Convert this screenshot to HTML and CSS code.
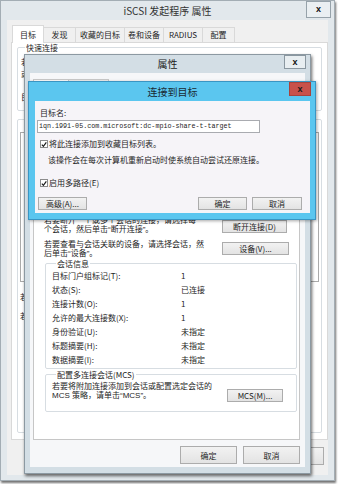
FILE: index.html
```html
<!DOCTYPE html>
<html lang="zh-CN">

<head>
   <meta charset="UTF-8">
   <meta name="viewport" content="width=device-width, initial-scale=1.0">
   <title>iSCSI 发起程序 属性</title>
   <link rel="stylesheet" href="styles.css">
</head>

<body>
   <!-- back window (mostly covered) -->
   <div class="win win-main">
      <div class="main-title">iSCSI 发起程序 属性<span class="xbtn main-x">x</span></div>
      <div class="main-body">
         <div class="tabs">
            <span class="tab on w32">目标</span>
            <span class="tab w32">发现</span>
            <span class="tab w49">收藏的目标</span>
            <span class="tab w39">卷和设备</span>
            <span class="tab w39">RADIUS</span>
            <span class="tab w32">配置</span>
         </div>
         <div class="tabpage">
            <fieldset class="grp quick">
               <legend>快速连接</legend>
               <p class="para">若</p>
               <p class="para">或</p>
               <p class="q-lbl">目</p>
            </fieldset>
            <fieldset class="grp found">
               <legend>已</legend>
               <div class="listbox"></div>
               <p class="para">若</p>
               <p class="para">若</p>
            </fieldset>
         </div>
         <div class="main-btns">
            <button class="btn">应用(A)</button>
         </div>
      </div>
   </div>

   <!-- properties window -->
   <div class="win win-prop">
      <div class="prop-title">属性<span class="xbtn prop-x">x</span></div>
      <div class="prop-body">
         <div class="ptabs">
            <span class="ptab on"></span>
            <span class="ptab"></span>
         </div>
         <div class="prop-page">
            <div class="sess"></div>
            <div class="act-row disc">
               <p class="act-text">若要断开一个或多个会话的连接，请选择每<br>个会话，然后单击“断开连接”。</p>
               <button class="btn b-disc">断开连接(D)</button>
            </div>
            <div class="act-row dev">
               <p class="act-text">若要查看与会话关联的设备，请选择会话，然<br>后单击“设备”。</p>
               <button class="btn b-dev">设备(V)...</button>
            </div>
            <fieldset class="grp info">
               <legend>会话信息</legend>
               <div class="kv"><span class="k">目标门户组标记(T):</span><span>1</span></div>
               <div class="kv"><span class="k">状态(S):</span><span>已连接</span></div>
               <div class="kv"><span class="k">连接计数(O):</span><span>1</span></div>
               <div class="kv"><span class="k">允许的最大连接数(X):</span><span>1</span></div>
               <div class="kv"><span class="k">身份验证(U):</span><span>未指定</span></div>
               <div class="kv"><span class="k">标题摘要(H):</span><span>未指定</span></div>
               <div class="kv"><span class="k">数据摘要(I):</span><span>未指定</span></div>
            </fieldset>
            <fieldset class="grp mcs">
               <legend>配置多连接会话(MCS)</legend>
               <div class="mcs-row">
                  <p class="act-text">若要将附加连接添加到会话或配置选定会话的<br>MCS 策略，请单击“MCS”。</p>
                  <button class="btn b-mcs">MCS(M)...</button>
               </div>
            </fieldset>
         </div>
         <div class="prop-btns">
            <button class="btn">确定</button>
            <button class="btn">取消</button>
         </div>
      </div>
   </div>

   <!-- connect window -->
   <div class="win win-conn">
      <div class="conn-title">连接到目标<span class="xbtn conn-x">x</span></div>
      <div class="conn-body">
         <p class="lbl">目标名:</p>
         <div class="input">iqn.1991-05.com.microsoft:dc-mpio-share-t-target</div>
         <div class="chk">
            <span class="box"><svg width="7" height="7" viewBox="0 0 7 7"><path d="M1 3.6 L2.8 5.6 L6.2 1" fill="none" stroke="#1a1a1a" stroke-width="1.4"/></svg></span>
            将此连接添加到收藏目标列表。
         </div>
         <p class="note">该操作会在每次计算机重新启动时使系统自动尝试还原连接。</p>
         <div class="chk multi">
            <span class="box"><svg width="7" height="7" viewBox="0 0 7 7"><path d="M1 3.6 L2.8 5.6 L6.2 1" fill="none" stroke="#1a1a1a" stroke-width="1.4"/></svg></span>
            启用多路径(E)
         </div>
         <div class="conn-btns">
            <button class="btn b-adv">高级(A)...</button>
            <button class="btn b-ok">确定</button>
            <button class="btn b-cancel">取消</button>
         </div>
      </div>
   </div>
</body>

</html>
```

FILE: styles.css
```css
* {
   padding: 0;
   margin: 0;
   box-sizing: border-box;
}

body {
   width: 338px;
   height: 484px;
   position: relative;
   overflow: hidden;
   background: #ffffff;
   font-family: "Noto Sans CJK SC", "Noto Sans", sans-serif;
   font-size: 8px;
   line-height: 9px;
   color: #1e1e1e;
}

.win {
   position: absolute;
}

.xbtn {
   position: absolute;
   top: 0;
   display: flex;
   justify-content: center;
   align-items: center;
   font-family: "Liberation Sans", sans-serif;
   font-weight: 700;
   font-size: 9px;
   color: #111;
}

.btn {
   font-family: inherit;
   font-size: 8px;
   line-height: 11px;
   color: #1e1e1e;
   border: 1px solid #acacac;
   background: linear-gradient(#f2f2f2, #e3e3e3);
   text-align: center;
}

.grp {
   border: 1px solid #d7dde2;
   border-radius: 2px;
   min-width: 0;
}

.grp legend {
   padding: 0 1px;
   margin-left: 4px;
   line-height: 9px;
}

/* back window */
.win-main {
   left: 0;
   top: 0;
   width: 335px;
   height: 481px;
   background: #e2e8ec;
   border: 1px solid #a3adb4;
   box-shadow: 1px 2px 2px rgba(0, 0, 0, 0.55);
   padding: 0 6px 6px;
}

.main-title {
   height: 19px;
   line-height: 19px;
   text-align: center;
   font-size: 10px;
   color: #333;
}

.main-x {
   right: 3px;
   width: 25px;
   height: 17px;
   border: 1px solid #96a2aa;
   background: #eaeff2;
}

.main-body {
   height: 455px;
   background: #f0f0f0;
   padding: 5px 0 0 4px;
}

.tabs {
   display: flex;
   align-items: flex-end;
   height: 17px;
   margin-left: 1px;
   position: relative;
   z-index: 1;
}

.tab {
   height: 15px;
   line-height: 14px;
   text-align: center;
   border: 1px solid #d9d9d9;
   border-left: none;
   border-bottom: none;
   background: #f0f0f0;
}

.tab.on {
   height: 18px;
   margin-bottom: -1px;
   background: #fff;
   border-left: 1px solid #d9d9d9;
   line-height: 17px;
}

.w32 { width: 32px; }
.w39 { width: 39px; }
.w49 { width: 49px; }

.tabpage {
   width: 317px;
   height: 398px;
   background: #fff;
   border: 1px solid #d9d9d9;
   padding: 0 5px;
}

.quick {
   height: 68px;
   padding: 3px 3px 0;
}

.para {
   margin-top: 2px;
   line-height: 10px;
}

.q-lbl {
   margin-top: 13px;
}

.found {
   margin-top: 4px;
   height: 318px;
   padding: 8px 2px 0;
}

.listbox {
   height: 150px;
   border: 1px solid #aaa;
   margin-bottom: 10px;
}

.found .para {
   margin-top: 9px;
}

.main-btns {
   display: flex;
   justify-content: flex-end;
   margin: 7px 4px 0 0;
}

.main-btns .btn {
   width: 58px;
   height: 18px;
   color: #8a8a8a;
}

/* properties window */
.win-prop {
   left: 24px;
   top: 54px;
   width: 287px;
   height: 420px;
   background: #d3dee5;
   border: 1px solid #8c99a2;
   box-shadow: 1px 2px 3px rgba(0, 0, 0, 0.6);
   padding: 0 5px 6px;
}

.prop-title {
   height: 18px;
   line-height: 18px;
   text-align: center;
   font-size: 10px;
   color: #222;
}

.prop-x {
   right: 4px;
   width: 22px;
   height: 14px;
   border: 1px solid #8a97a0;
   background: #e8eef1;
}

.prop-body {
   height: 394px;
   background: #f6f7f9;
   padding: 6px 0 0 3px;
}

.ptabs {
   display: flex;
   height: 16px;
}

.ptab {
   width: 36px;
   border: 1px solid #c9c9c9;
   border-bottom: none;
   background: #fff;
}

.ptab + .ptab {
   width: 40px;
   background: #f0f0f0;
   border-left: none;
}

.prop-page {
   width: 267px;
   height: 345px;
   background: #fff;
   border: 1px solid #c6c6c6;
   padding: 0 0 0 10px;
}

.sess {
   height: 120px;
}

.act-row {
   display: flex;
   align-items: flex-start;
}

/* tight two-line notes: latin metrics keep the line boxes within 9px */
.act-text {
   width: 178px;
   white-space: nowrap;
   line-height: 9px;
   font-family: "Liberation Sans", "Noto Sans CJK SC", sans-serif;
}

.disc .btn {
   margin-top: 4px;
}

.dev {
   margin-top: 6px;
}

.dev .btn {
   margin-top: 2px;
}

.b-disc {
   width: 65px;
   height: 13px;
}

.b-dev {
   width: 67px;
   height: 13px;
}

.info {
   margin: 1px 0 0 1px;
   width: 252px;
   padding: 1px 0 1px 6px;
}

.kv {
   display: flex;
   line-height: 14px;
}

.k {
   width: 129px;
}

.mcs {
   margin: 1px 0 0 1px;
   width: 252px;
   padding: 3px 0 9px 6px;
}

.mcs-row {
   display: flex;
   align-items: flex-start;
}

.mcs-row .act-text {
   width: 175px;
}

.b-mcs {
   width: 56px;
   height: 13px;
   margin-top: 7px;
}

.prop-btns {
   display: flex;
   justify-content: flex-end;
   gap: 6px;
   margin: 6px 5px 0 0;
}

.prop-btns .btn {
   width: 57px;
   height: 18px;
}

/* connect window */
.win-conn {
   left: 28px;
   top: 81px;
   width: 288px;
   height: 139px;
   background: #5bc6ef;
   border: 1px solid #3a95c3;
   box-shadow: 1px 1px 3px rgba(0, 0, 0, 0.35);
   padding: 0 5px 6px 6px;
}

.conn-title {
   height: 19px;
   line-height: 19px;
   text-align: center;
   font-size: 10px;
   color: #1a2a33;
}

.conn-x {
   right: 4px;
   width: 22px;
   height: 14px;
   background: #c8514a;
   border: 1px solid #a8433d;
   color: #1a1a1a;
}

.conn-body {
   height: 112px;
   background: #f6f4f8;
   padding: 7px 0 0 5px;
}

.input {
   margin: 3px 0 0 -3px;
   width: 223px;
   height: 13px;
   border: 1px solid #a9abb0;
   background: #fff;
   padding-left: 1px;
   font-family: "Liberation Mono", monospace;
   font-size: 6.7px;
   line-height: 11px;
   white-space: nowrap;
}

.chk {
   display: flex;
   align-items: center;
   gap: 1px;
   margin-top: 6px;
   line-height: 10px;
}

.chk.multi {
   margin-top: 13px;
}

.box {
   width: 8px;
   height: 8px;
   border: 1px solid #8c8c8c;
   background: #fff;
   display: flex;
   justify-content: center;
   align-items: center;
}

.note {
   margin-top: 6px;
   padding-left: 8px;
   line-height: 10px;
}

.conn-btns {
   display: flex;
   margin: 9px 8px 0 -2px;
}

.conn-btns .btn {
   height: 13px;
}

.b-adv {
   width: 49px;
}

.b-ok {
   width: 49px;
   margin-left: auto;
}

.b-cancel {
   width: 50px;
   margin-left: 5px;
}
```
